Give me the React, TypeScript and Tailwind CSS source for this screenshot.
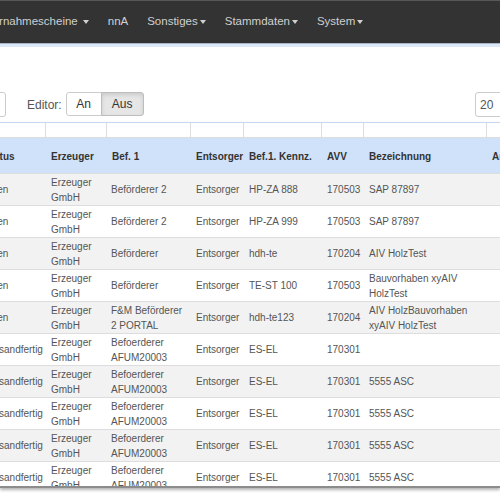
import React from "react";

type Row = {
  status: string;
  erzeuger: string;
  bef: string;
  entsorger: string;
  kennz: string;
  avv: string;
  bez: string;
};

const rows: Row[] = [
  { status: "Offen", erzeuger: "Erzeuger GmbH", bef: "Beförderer 2", entsorger: "Entsorger", kennz: "HP-ZA 888", avv: "170503", bez: "SAP 87897" },
  { status: "Offen", erzeuger: "Erzeuger GmbH", bef: "Beförderer 2", entsorger: "Entsorger", kennz: "HP-ZA 999", avv: "170503", bez: "SAP 87897" },
  { status: "Offen", erzeuger: "Erzeuger GmbH", bef: "Beförderer", entsorger: "Entsorger", kennz: "hdh-te", avv: "170204", bez: "AIV HolzTest" },
  { status: "Offen", erzeuger: "Erzeuger GmbH", bef: "Beförderer", entsorger: "Entsorger", kennz: "TE-ST 100", avv: "170503", bez: "Bauvorhaben xyAIV HolzTest" },
  { status: "Offen", erzeuger: "Erzeuger GmbH", bef: "F&M Beförderer 2 PORTAL", entsorger: "Entsorger", kennz: "hdh-te123", avv: "170204", bez: "AIV HolzBauvorhaben xyAIV HolzTest" },
  { status: "Versandfertig", erzeuger: "Erzeuger GmbH", bef: "Befoerderer AFUM20003", entsorger: "Entsorger", kennz: "ES-EL", avv: "170301", bez: "" },
  { status: "Versandfertig", erzeuger: "Erzeuger GmbH", bef: "Befoerderer AFUM20003", entsorger: "Entsorger", kennz: "ES-EL", avv: "170301", bez: "5555 ASC" },
  { status: "Versandfertig", erzeuger: "Erzeuger GmbH", bef: "Befoerderer AFUM20003", entsorger: "Entsorger", kennz: "ES-EL", avv: "170301", bez: "5555 ASC" },
  { status: "Versandfertig", erzeuger: "Erzeuger GmbH", bef: "Befoerderer AFUM20003", entsorger: "Entsorger", kennz: "ES-EL", avv: "170301", bez: "5555 ASC" },
  { status: "Versandfertig", erzeuger: "Erzeuger GmbH", bef: "Befoerderer AFUM20003", entsorger: "Entsorger", kennz: "ES-EL", avv: "170301", bez: "5555 ASC" },
];

const cols = "grid grid-cols-[67px_61px_84px_53px_78px_42px_123px_120px]";

function Caret() {
  return (
    <span className="ml-[2px] inline-block h-0 w-0 border-x-[3px] border-t-[4px] border-x-transparent border-t-current" />
  );
}

function NavItem({ label, caret, space }: { label: string; caret?: boolean; space?: boolean }) {
  return (
    <span className="inline-flex items-center whitespace-nowrap">
      {label}
      {caret && (space ? <span className="ml-[3px] inline-flex"><Caret /></span> : <Caret />)}
    </span>
  );
}

export default function App() {
  const headers = ["Status", "Erzeuger", "Bef. 1", "Entsorger", "Bef.1. Kennz.", "AVV", "Bezeichnung", "Anfallstelle"];

  return (
    <div className="h-[500px] w-[500px] overflow-hidden bg-white font-['Liberation_Sans',Arial,sans-serif]">
      <nav className="flex h-[43px] items-center border-t border-[#585858] bg-[#333333] text-[11.5px] text-[#d0d0d0]">
        <div className="ml-[-22px] flex items-center gap-[19px]">
          <NavItem label="Übernahmescheine" caret space />
          <NavItem label="nnA" />
          <NavItem label="Sonstiges" caret />
          <NavItem label="Stammdaten" caret />
          <NavItem label="System" caret />
        </div>
      </nav>
      <div className="h-[4px] border-t border-[#a9b6c6] bg-[#dde9f9]" />

      <div className="mt-[45px] flex h-[25px] items-center text-[12px] text-[#555]">
        <div className="ml-[-24px] h-[25px] w-[30px] rounded-[3px] border border-[#ccc]" />
        <span className="ml-[21px]">Editor:</span>
        <div className="ml-[4px] flex h-[24px] self-start">
          <button className="h-full w-[36px] rounded-l-[3px] border border-[#ccc] bg-white text-[#333]">An</button>
          <button className="ml-[-1px] h-full w-[43px] rounded-r-[3px] border border-[#bdbdbd] bg-[#e6e6e6] text-[#333] shadow-[inset_0_2px_4px_rgba(0,0,0,0.12)]">
            Aus
          </button>
        </div>
        <div className="ml-auto mr-[-15px] flex h-[25px] w-[40px] items-center rounded-[3px] border border-[#ccc] pl-[4px]">
          20
        </div>
      </div>

      <div className="mt-[5px] h-[366px] overflow-hidden border-t border-b-2 border-t-[#c6d8f0] border-b-[#8c8c8c] shadow-[0_2px_3px_rgba(0,0,0,0.3)]">
        <div className="ml-[-21px] w-[628px] text-[10px]">
          <div className={`${cols} h-[15px] border-b border-[#ddd] bg-white`}>
            {headers.map((h) => (
              <div key={h} className="border-r border-[#ddd]" />
            ))}
          </div>
          <div className={`${cols} h-[35px] items-center bg-[#d0e2fa] pt-[2px] font-bold text-[#333]`}>
            {headers.map((h) => (
              <div key={h} className="whitespace-nowrap pl-[5px]">
                {h}
              </div>
            ))}
          </div>
          {rows.map((r, i) => (
            <div
              key={i}
              className={`${cols} h-[32px] items-center border-t border-[#ddd] leading-[15px] text-[#555] ${
                i % 2 === 0 ? "bg-[#f2f2f2]" : "bg-white"
              }`}
            >
              <div className="whitespace-nowrap pl-[5px]">{r.status}</div>
              <div className="pl-[5px] pr-[4px]">{r.erzeuger}</div>
              <div className="pl-[4px] pr-[4px]">{r.bef}</div>
              <div className="pl-[5px]">{r.entsorger}</div>
              <div className="whitespace-nowrap pl-[5px]">{r.kennz}</div>
              <div className="pl-[5px]">{r.avv}</div>
              <div className="pl-[5px] pr-[12px]">{r.bez}</div>
              <div className="pl-[4px]" />
            </div>
          ))}
        </div>
      </div>
    </div>
  );
}
